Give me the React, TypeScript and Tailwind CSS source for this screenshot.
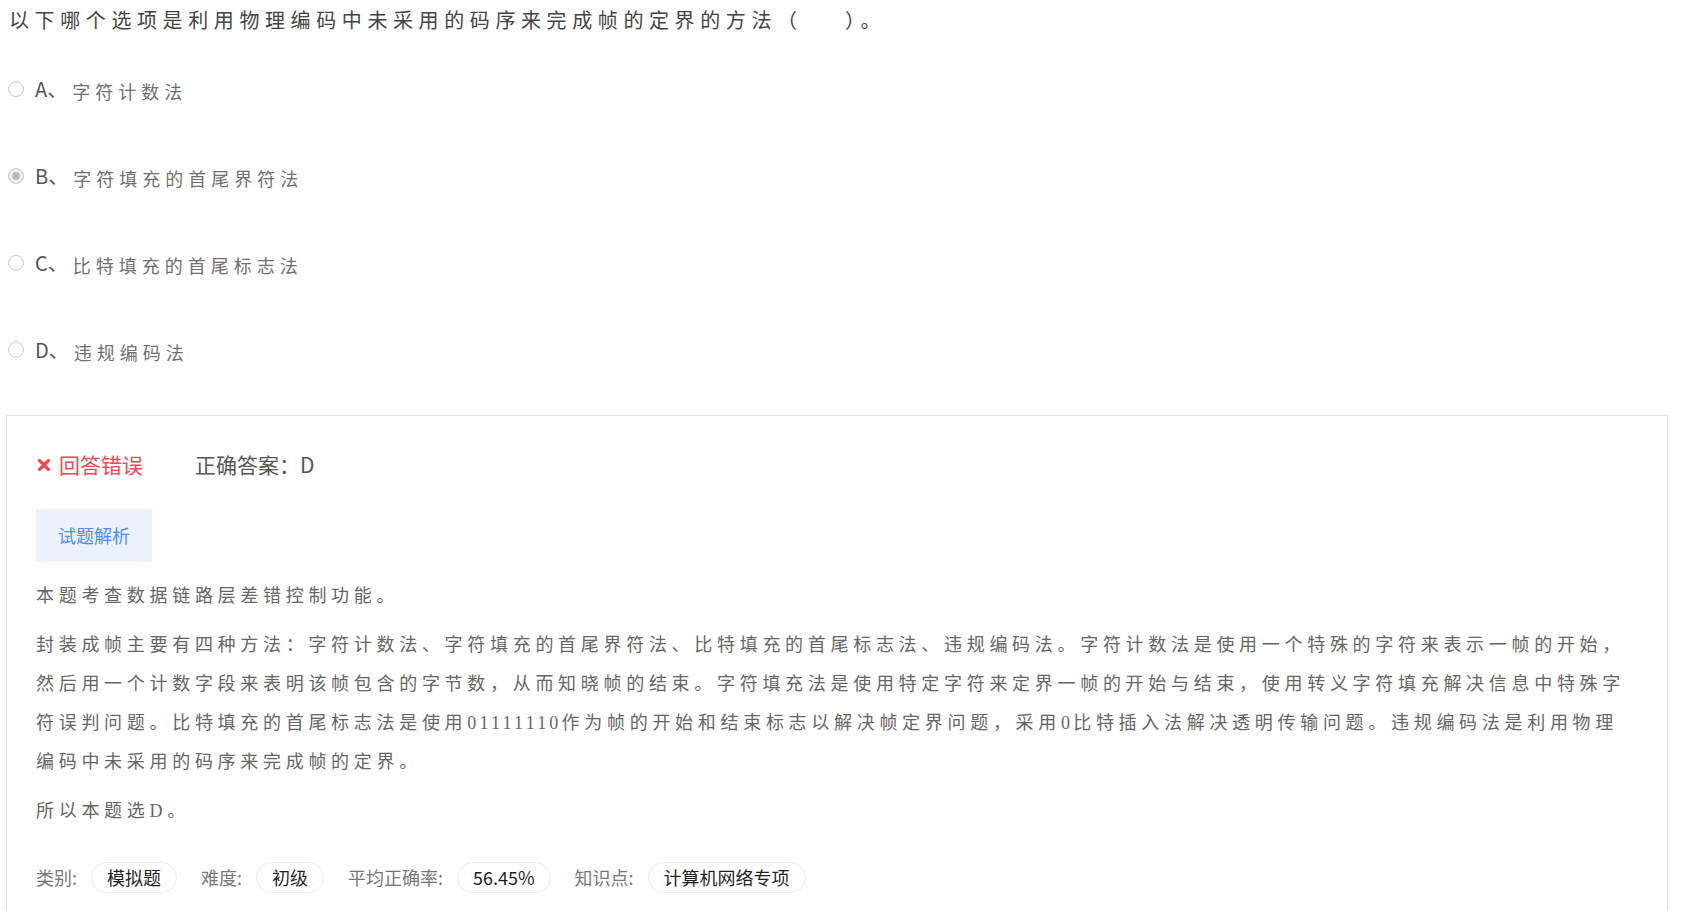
import React from "react";

const options = [
  { key: "A", text: "字符计数法", checked: false },
  { key: "B", text: "字符填充的首尾界符法", checked: true },
  { key: "C", text: "比特填充的首尾标志法", checked: false },
  { key: "D", text: "违规编码法", checked: false },
];

const tags = [
  { label: "类别:", value: "模拟题" },
  { label: "难度:", value: "初级" },
  { label: "平均正确率:", value: "56.45%" },
  { label: "知识点:", value: "计算机网络专项" },
];

function Radio({ checked }: { checked: boolean }) {
  return (
    <span
      className={`mb-[5px] ml-[2px] flex h-[16px] w-[16px] shrink-0 items-center justify-center rounded-full border ${
        checked ? "border-[#c6c6c6] bg-[#f0f0f0]" : "border-[#c9c9c9] bg-white"
      }`}
    >
      {checked && <span className="h-[8px] w-[8px] rounded-full bg-[#bdbdbd]" />}
    </span>
  );
}

export default function App() {
  return (
    <div className="h-screen overflow-hidden bg-white pl-[6px] pr-[14px]">
      {/* Question */}
      <h1 className="pl-[3px] pt-[6px] font-['Liberation_Serif','Noto_Sans_CJK_SC',serif] text-[20px] font-normal leading-[31px] tracking-[5.6px] text-[#444]">
        以下哪个选项是利用物理编码中未采用的码序来完成帧的定界的方法（&nbsp;&nbsp;&nbsp;&nbsp;）。
      </h1>

      {/* Options */}
      <ul className="mt-[11px]">
        {options.map((o) => (
          <li key={o.key} className="flex h-[87px] items-center">
            <Radio checked={o.checked} />
            <span className="mb-[5px] ml-[11px] font-['Noto_Sans_CJK_SC',sans-serif] text-[20px] leading-[26px] text-[#555]">
              {o.key}、
            </span>
            <span className="ml-[5px] mt-[3px] font-['Liberation_Serif','Noto_Sans_CJK_SC',serif] text-[18px] leading-[24px] tracking-[5px] text-[#707070]">
              {o.text}
            </span>
          </li>
        ))}
      </ul>

      {/* Answer panel */}
      <div className="mt-[19px] border border-b-0 border-[#e2e2e2] px-[29px] pb-[30px] pt-[34px]">
        <div className="flex h-[30px] items-center font-['Noto_Sans_CJK_SC',sans-serif] text-[21px]">
          <svg viewBox="0 0 14 14" className="ml-[1px] h-[14px] w-[14px] text-[#f9474f]">
            <path
              d="M2.6 2.6L11.4 11.4M11.4 2.6L2.6 11.4"
              stroke="currentColor"
              strokeWidth="3.4"
              strokeLinecap="round"
            />
          </svg>
          <span className="ml-[8px] text-[#f9474f]">回答错误</span>
          <span className="ml-[52px] text-[#555]">正确答案：D</span>
        </div>

        <button className="mt-[29px] flex h-[53px] w-[116px] items-center justify-center bg-[#ebf2fe] font-['Noto_Sans_CJK_SC',sans-serif] text-[18px] text-[#4b8cf7]">
          试题解析
        </button>

        <div className="font-['Liberation_Serif','Noto_Sans_CJK_SC',serif] text-[18px] leading-[39px] tracking-[4.7px] text-[#666]">
          <p className="mt-[15px]">本题考查数据链路层差错控制功能。</p>
          <p className="mt-[10px]">
            封装成帧主要有四种方法：字符计数法、字符填充的首尾界符法、比特填充的首尾标志法、违规编码法。字符计数法是使用一个特殊的字符来表示一帧的开始，
            <br />
            然后用一个计数字段来表明该帧包含的字节数，从而知晓帧的结束。字符填充法是使用特定字符来定界一帧的开始与结束，使用转义字符填充解决信息中特殊字
            <br />
            符误判问题。比特填充的首尾标志法是使用<span className="tracking-[3.2px]">01111110</span>作为帧的开始和结束标志以解决帧定界问题，采用<span className="tracking-[3.2px]">0</span>比特插入法解决透明传输问题。违规编码法是利用物理
            <br />
            编码中未采用的码序来完成帧的定界。
          </p>
          <p className="mt-[10px]">所以本题选D。</p>
        </div>

        {/* Meta tags */}
        <div className="mt-[31px] flex items-center font-['Noto_Sans_CJK_SC',sans-serif] text-[18px]">
          {tags.map((t) => (
            <div key={t.label} className="mr-[24px] flex items-center">
              <span className="mr-[14px] text-[#777]">{t.label}</span>
              <span className="flex h-[31px] items-center rounded-full border border-[#ececec] px-[15px] text-[#1f1f1f]">
                {t.value}
              </span>
            </div>
          ))}
        </div>
      </div>
    </div>
  );
}
